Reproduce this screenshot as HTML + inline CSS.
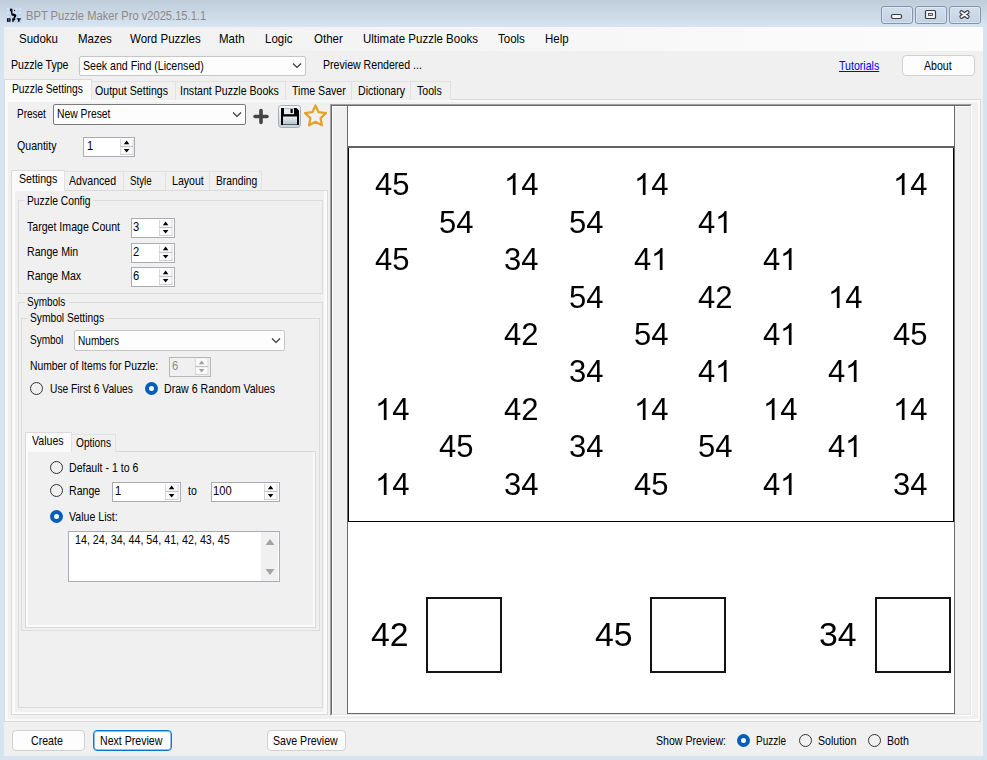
<!DOCTYPE html>
<html><head><meta charset="utf-8"><style>
*{margin:0;padding:0;box-sizing:border-box}
html,body{width:987px;height:760px;overflow:hidden;background:#d6e3f0;font-family:"Liberation Sans",sans-serif;font-size:10.6px;color:#000}
.a{position:absolute}
.t{position:absolute;white-space:nowrap;line-height:12px}
.wbtn{position:absolute;top:6px;width:32px;height:18px;border:1px solid #8393ab;border-radius:3px;background:linear-gradient(#d2deeb,#c3d2e3);box-shadow:inset 0 0 0 1px rgba(255,255,255,.35)}
.combo{position:absolute;background:#fdfdfd;border:1px solid #c6c6c6;border-radius:2px}
.btn{position:absolute;background:#fdfdfd;border:1px solid #d0d0d0;border-radius:4px}
.num{position:absolute;background:#fff;border:1px solid #a9acb2}
.spin{position:absolute;right:2px;top:1px;width:14px;height:16px}
.grp{position:absolute;border:1px solid #dcdcdc;border-radius:0}
.radio{position:absolute;width:13px;height:13px;border:1px solid #333;border-radius:50%}
.rsel{border:none;background:#005fb8}
.rsel::after{content:"";position:absolute;left:4px;top:4px;width:5px;height:5px;border-radius:50%;background:#fff}
.n{position:absolute;font-size:31px;line-height:31px;white-space:nowrap;will-change:transform}
.n2{font-size:33.8px;line-height:33px}
.one{width:0.5562em;height:0.7188em;vertical-align:baseline}
.box{position:absolute;border:2px solid #141414;width:76px;height:76px}
.chev{position:absolute}
</style></head><body>
<div class="a" style="left:0px;top:0px;width:987px;height:27px;background:linear-gradient(#bfcddb,#d7e4f1)"></div>
<div class="a" style="left:4px;top:27px;width:979px;height:729px;background:#f0f0f0"></div>
<div class="a" style="left:4px;top:27px;width:979px;height:24px;background:linear-gradient(to right,#f0f0f0,#fcfcfc)"></div>
<svg class="a" style="left:6px;top:7px" width="16" height="16" viewBox="0 0 16 16">
<rect width="16" height="16" fill="#c4d5f0"/>
<g fill="#dde8f8" opacity=".8"><rect x="1" y="1" width="2" height="2"/><rect x="5" y="1" width="2" height="2"/><rect x="9" y="1" width="2" height="2"/><rect x="13" y="1" width="2" height="2"/><rect x="1" y="5" width="2" height="2"/><rect x="9" y="5" width="2" height="2"/><rect x="13" y="5" width="2" height="2"/><rect x="1" y="9" width="2" height="2"/><rect x="13" y="9" width="2" height="2"/></g>
<circle cx="5.2" cy="3" r="1.4" fill="#000"/>
<circle cx="8.6" cy="3.3" r="0.6" fill="#000"/>
<path d="M4.6 3.5 L6.2 3.5 L6.6 6.6 Q9.8 6.8 10.4 8.2 Q10.2 9.8 8.6 11.6 L6.8 11.6 L8.2 9.4 Q7.8 8.4 5.6 8.4 Z" fill="#000"/>
<g fill="#0a0a0a"><path d="M1 11.3 H4 Q5 11.6 4.6 12.9 Q5 14.5 4 14.8 H1 Z"/><path d="M6.2 11.3 H9 Q9.8 12.2 9 13.2 H7.8 V14.8 H6.2 Z"/><path d="M10.8 11.3 H14.8 V12.6 H13.6 V14.8 H12 V12.6 H10.8 Z"/></g>
<g fill="#c4d5f0"><rect x="2.2" y="12.4" width="1.2" height="0.5"/><rect x="2.2" y="13.6" width="1.2" height="0.5"/></g>
</svg>
<div class="t" style="left:26.2px;top:10px;font-size:13.05px;transform:scaleX(0.8547);transform-origin:0 0;color:#8e8787">BPT Puzzle Maker Pro v2025.15.1.1</div>
<div class="wbtn" style="left:881px"></div>
<div class="wbtn" style="left:915px"></div>
<div class="wbtn" style="left:949px"></div>
<svg class="a" style="left:881px;top:6px" width="100" height="18" viewBox="0 0 100 18">
<rect x="10.5" y="8.5" width="10" height="4" rx="1.5" fill="#f4f4f4" stroke="#3c3c44" stroke-width="1.2"/>
<rect x="44.5" y="4.5" width="10" height="8" rx="1" fill="#f4f4f4" stroke="#3c3c44" stroke-width="1.2"/>
<rect x="47.5" y="7.5" width="4" height="2" fill="#c8d4e2" stroke="#3c3c44" stroke-width="0.8"/>
<path d="M80.5 6.3 L86.5 10.8 M86.5 6.3 L80.5 10.8" stroke="#3c3c44" stroke-width="4.2" stroke-linecap="round"/>
<path d="M80.5 6.3 L86.5 10.8 M86.5 6.3 L80.5 10.8" stroke="#f4f4f4" stroke-width="2" stroke-linecap="round"/>
</svg>
<div class="t" style="left:19px;top:33px;font-size:12.6px;line-height:13px;transform:scaleX(0.913);transform-origin:0 0">Sudoku</div>
<div class="t" style="left:78px;top:33px;font-size:12.6px;line-height:13px;transform:scaleX(0.913);transform-origin:0 0">Mazes</div>
<div class="t" style="left:130px;top:33px;font-size:12.6px;line-height:13px;transform:scaleX(0.913);transform-origin:0 0">Word Puzzles</div>
<div class="t" style="left:219px;top:33px;font-size:12.6px;line-height:13px;transform:scaleX(0.913);transform-origin:0 0">Math</div>
<div class="t" style="left:265px;top:33px;font-size:12.6px;line-height:13px;transform:scaleX(0.913);transform-origin:0 0">Logic</div>
<div class="t" style="left:314px;top:33px;font-size:12.6px;line-height:13px;transform:scaleX(0.913);transform-origin:0 0">Other</div>
<div class="t" style="left:363px;top:33px;font-size:12.6px;line-height:13px;transform:scaleX(0.913);transform-origin:0 0">Ultimate Puzzle Books</div>
<div class="t" style="left:498px;top:33px;font-size:12.6px;line-height:13px;transform:scaleX(0.913);transform-origin:0 0">Tools</div>
<div class="t" style="left:545px;top:33px;font-size:12.6px;line-height:13px;transform:scaleX(0.913);transform-origin:0 0">Help</div>
<div class="t" style="left:11.100000000000001px;top:59px;font-size:12.40px;transform:scaleX(0.8547);transform-origin:0 0;">Puzzle Type</div>
<div class="combo" style="left:79px;top:56px;width:227px;height:20px"></div>
<div class="t" style="left:82.8px;top:60px;font-size:12.40px;transform:scaleX(0.8547);transform-origin:0 0;">Seek and Find (Licensed)</div>
<svg class="a" style="left:292px;top:62px" width="10" height="7"><path d="M1 1.5 L5 5.5 L9 1.5" fill="none" stroke="#333" stroke-width="1.1"/></svg>
<div class="t" style="left:323.0px;top:59px;font-size:12.40px;transform:scaleX(0.8547);transform-origin:0 0;">Preview Rendered ...</div>
<div class="t" style="left:838.9px;top:60px;font-size:12.40px;transform:scaleX(0.8547);transform-origin:0 0;color:#0000ff;text-decoration:underline">Tutorials</div>
<div class="btn" style="left:902px;top:55px;width:73px;height:21px"></div>
<div class="t" style="left:924.0px;top:60px;font-size:12.40px;transform:scaleX(0.8547);transform-origin:0 0;">About</div>
<div class="a" style="left:4px;top:99px;width:977px;height:623px;border:1px solid #dadada;background:#fafafa"></div>
<div class="a" style="left:8px;top:102px;width:970px;height:617px;background:#f0f0f0"></div>
<div class="a" style="left:4px;top:79px;width:88px;height:21px;background:#fafafa;border:1px solid #dadada;border-bottom:none"></div>
<div class="a" style="left:5px;top:99px;width:86px;height:3px;background:#fafafa"></div>
<div class="a" style="left:91px;top:81px;width:85px;height:19px;background:#f0f0f0;border:1px solid #e1e1e1;border-bottom:none"></div>
<div class="a" style="left:175px;top:81px;width:111px;height:19px;background:#f0f0f0;border:1px solid #e1e1e1;border-bottom:none"></div>
<div class="a" style="left:285px;top:81px;width:67px;height:19px;background:#f0f0f0;border:1px solid #e1e1e1;border-bottom:none"></div>
<div class="a" style="left:351px;top:81px;width:60px;height:19px;background:#f0f0f0;border:1px solid #e1e1e1;border-bottom:none"></div>
<div class="a" style="left:410px;top:81px;width:41px;height:19px;background:#f0f0f0;border:1px solid #e1e1e1;border-bottom:none"></div>
<div class="t" style="left:12.0px;top:83px;font-size:12.40px;transform:scaleX(0.8305);transform-origin:0 0;">Puzzle Settings</div>
<div class="t" style="left:94.89999999999999px;top:85px;font-size:12.40px;transform:scaleX(0.8547);transform-origin:0 0;">Output Settings</div>
<div class="t" style="left:180.20000000000002px;top:85px;font-size:12.40px;transform:scaleX(0.8547);transform-origin:0 0;">Instant Puzzle Books</div>
<div class="t" style="left:292.3px;top:85px;font-size:12.40px;transform:scaleX(0.8547);transform-origin:0 0;">Time Saver</div>
<div class="t" style="left:358.0px;top:85px;font-size:12.40px;transform:scaleX(0.8547);transform-origin:0 0;">Dictionary</div>
<div class="t" style="left:417.40000000000003px;top:85px;font-size:12.40px;transform:scaleX(0.8547);transform-origin:0 0;">Tools</div>
<div class="t" style="left:17.3px;top:108px;font-size:12.40px;transform:scaleX(0.8063);transform-origin:0 0;">Preset</div>
<div class="combo" style="left:53px;top:104px;width:193px;height:21px;border-color:#7a7a7a"></div>
<div class="t" style="left:56.5px;top:108px;font-size:12.40px;transform:scaleX(0.8345);transform-origin:0 0;">New Preset</div>
<svg class="a" style="left:232px;top:111px" width="10" height="7"><path d="M1 1.5 L5 5.5 L9 1.5" fill="none" stroke="#333" stroke-width="1.1"/></svg>
<svg class="a" style="left:252px;top:108px" width="18" height="17"><path d="M9 2.5 V14.5 M3 8.5 H15" stroke="#444" stroke-width="3.6" stroke-linecap="round"/></svg>
<svg class="a" style="left:278px;top:105px" width="24" height="23" viewBox="0 0 24 23">
<defs><linearGradient id="sg" x1="0" y1="0" x2="0" y2="1"><stop offset="0" stop-color="#f7f9fb"/><stop offset="1" stop-color="#c6d2dc"/></linearGradient>
<linearGradient id="sg2" x1="0" y1="0" x2="0" y2="1"><stop offset="0" stop-color="#e9eef2"/><stop offset="1" stop-color="#b4c2cc"/></linearGradient></defs>
<rect x="0.5" y="0.5" width="22" height="22" rx="3" fill="url(#sg)" stroke="#9fb0bd"/>
<path d="M3 3 H18.5 L21 5.5 V20 H3 Z" fill="#000"/>
<rect x="6" y="3.2" width="10" height="6" fill="#e8ecef"/>
<rect x="12.5" y="4" width="2.2" height="4" fill="#000"/>
<rect x="5" y="11.5" width="14" height="8" fill="url(#sg2)"/>
</svg>
<svg class="a" style="left:303px;top:103px" width="26" height="25" viewBox="0 0 26 25"><path d="M12.50 2.50 L15.62 9.21 L22.96 10.10 L17.54 15.14 L18.97 22.40 L12.50 18.80 L6.03 22.40 L7.46 15.14 L2.04 10.10 L9.38 9.21 Z" fill="none" stroke="#e0a526" stroke-width="2.2" stroke-linejoin="round"/></svg>
<div class="t" style="left:17.400000000000002px;top:140px;font-size:12.40px;transform:scaleX(0.8547);transform-origin:0 0;">Quantity</div>
<div class="num" style="left:83px;top:137px;width:52px;height:20px"></div>
<div class="t" style="left:86.6px;top:140px;font-size:13.10px;transform:scaleX(0.8547);transform-origin:0 0;">1</div>
<svg class="a" style="left:119px;top:138px" width="15" height="18" viewBox="0 0 15 18">
<rect x="1" y="1" width="13.5" height="7.5" fill="#fafafa"/><rect x="1" y="9.5" width="13.5" height="7" fill="#fafafa"/>
<path d="M1.5 1 V8.5 M1.5 9.5 V16.5 M14 1 V8.5 M14 9.5 V16.5" stroke="#d8d8d8" stroke-width="1"/>
<path d="M1 8.5 H14.5" stroke="#c4c4c4" stroke-width="1.2"/><path d="M1 16.5 H14.5" stroke="#cfcfcf" stroke-width="1"/>
<path d="M4.8 6.2 L7.6 2.6 L10.4 6.2 Z" fill="#000"/><path d="M4.8 11 L7.6 14.6 L10.4 11 Z" fill="#000"/></svg>
<div class="a" style="left:11px;top:190px;width:317px;height:525px;border:1px solid #dadada;background:#fafafa"></div>
<div class="a" style="left:15px;top:191px;width:309px;height:521px;background:#f0f0f0"></div>
<div class="a" style="left:11px;top:170px;width:54px;height:20px;background:#fafafa;border:1px solid #dadada;border-bottom:none"></div>
<div class="a" style="left:12px;top:189px;width:52px;height:2px;background:#fafafa"></div>
<div class="a" style="left:64px;top:171px;width:60px;height:19px;background:#f0f0f0;border:1px solid #e1e1e1;border-bottom:none"></div>
<div class="a" style="left:123px;top:171px;width:43px;height:19px;background:#f0f0f0;border:1px solid #e1e1e1;border-bottom:none"></div>
<div class="a" style="left:165px;top:171px;width:45px;height:19px;background:#f0f0f0;border:1px solid #e1e1e1;border-bottom:none"></div>
<div class="a" style="left:209px;top:171px;width:53px;height:19px;background:#f0f0f0;border:1px solid #e1e1e1;border-bottom:none"></div>
<div class="t" style="left:19.2px;top:173px;font-size:12.40px;transform:scaleX(0.8547);transform-origin:0 0;">Settings</div>
<div class="t" style="left:69.1px;top:175px;font-size:12.40px;transform:scaleX(0.8547);transform-origin:0 0;">Advanced</div>
<div class="t" style="left:129.8px;top:175px;font-size:12.40px;transform:scaleX(0.7862);transform-origin:0 0;">Style</div>
<div class="t" style="left:171.8px;top:175px;font-size:12.40px;transform:scaleX(0.8547);transform-origin:0 0;">Layout</div>
<div class="t" style="left:215.9px;top:175px;font-size:12.40px;transform:scaleX(0.8305);transform-origin:0 0;">Branding</div>
<div class="grp" style="left:18px;top:200px;width:305px;height:94px"></div>
<div class="a" style="left:25px;top:195px;width:68px;height:12px;background:#f0f0f0"></div>
<div class="t" style="left:27.1px;top:195px;font-size:12.40px;transform:scaleX(0.8305);transform-origin:0 0;">Puzzle Config</div>
<div class="t" style="left:27.3px;top:221px;font-size:12.40px;transform:scaleX(0.8547);transform-origin:0 0;">Target Image Count</div>
<div class="num" style="left:131px;top:218px;width:44px;height:20px"></div>
<div class="t" style="left:132.9px;top:221px;font-size:13.10px;transform:scaleX(0.8547);transform-origin:0 0;">3</div>
<svg class="a" style="left:158px;top:219px" width="15" height="18" viewBox="0 0 15 18">
<rect x="1" y="1" width="13.5" height="7.5" fill="#fafafa"/><rect x="1" y="9.5" width="13.5" height="7" fill="#fafafa"/>
<path d="M1.5 1 V8.5 M1.5 9.5 V16.5 M14 1 V8.5 M14 9.5 V16.5" stroke="#d8d8d8" stroke-width="1"/>
<path d="M1 8.5 H14.5" stroke="#c4c4c4" stroke-width="1.2"/><path d="M1 16.5 H14.5" stroke="#cfcfcf" stroke-width="1"/>
<path d="M4.8 6.2 L7.6 2.6 L10.4 6.2 Z" fill="#000"/><path d="M4.8 11 L7.6 14.6 L10.4 11 Z" fill="#000"/></svg>
<div class="t" style="left:27.3px;top:246px;font-size:12.40px;transform:scaleX(0.8547);transform-origin:0 0;">Range Min</div>
<div class="num" style="left:131px;top:243px;width:44px;height:20px"></div>
<div class="t" style="left:132.9px;top:246px;font-size:13.10px;transform:scaleX(0.8547);transform-origin:0 0;">2</div>
<svg class="a" style="left:158px;top:244px" width="15" height="18" viewBox="0 0 15 18">
<rect x="1" y="1" width="13.5" height="7.5" fill="#fafafa"/><rect x="1" y="9.5" width="13.5" height="7" fill="#fafafa"/>
<path d="M1.5 1 V8.5 M1.5 9.5 V16.5 M14 1 V8.5 M14 9.5 V16.5" stroke="#d8d8d8" stroke-width="1"/>
<path d="M1 8.5 H14.5" stroke="#c4c4c4" stroke-width="1.2"/><path d="M1 16.5 H14.5" stroke="#cfcfcf" stroke-width="1"/>
<path d="M4.8 6.2 L7.6 2.6 L10.4 6.2 Z" fill="#000"/><path d="M4.8 11 L7.6 14.6 L10.4 11 Z" fill="#000"/></svg>
<div class="t" style="left:27.3px;top:270px;font-size:12.40px;transform:scaleX(0.8547);transform-origin:0 0;">Range Max</div>
<div class="num" style="left:131px;top:267px;width:44px;height:20px"></div>
<div class="t" style="left:132.9px;top:270px;font-size:13.10px;transform:scaleX(0.8547);transform-origin:0 0;">6</div>
<svg class="a" style="left:158px;top:268px" width="15" height="18" viewBox="0 0 15 18">
<rect x="1" y="1" width="13.5" height="7.5" fill="#fafafa"/><rect x="1" y="9.5" width="13.5" height="7" fill="#fafafa"/>
<path d="M1.5 1 V8.5 M1.5 9.5 V16.5 M14 1 V8.5 M14 9.5 V16.5" stroke="#d8d8d8" stroke-width="1"/>
<path d="M1 8.5 H14.5" stroke="#c4c4c4" stroke-width="1.2"/><path d="M1 16.5 H14.5" stroke="#cfcfcf" stroke-width="1"/>
<path d="M4.8 6.2 L7.6 2.6 L10.4 6.2 Z" fill="#000"/><path d="M4.8 11 L7.6 14.6 L10.4 11 Z" fill="#000"/></svg>
<div class="grp" style="left:18px;top:302px;width:305px;height:406px"></div>
<div class="a" style="left:25px;top:297px;width:44px;height:12px;background:#f0f0f0"></div>
<div class="t" style="left:27.1px;top:296px;font-size:12.40px;transform:scaleX(0.8063);transform-origin:0 0;">Symbols</div>
<div class="grp" style="left:21px;top:318px;width:299px;height:313px"></div>
<div class="a" style="left:28px;top:313px;width:79px;height:12px;background:#f0f0f0"></div>
<div class="t" style="left:30.0px;top:312px;font-size:12.40px;transform:scaleX(0.8265);transform-origin:0 0;">Symbol Settings</div>
<div class="t" style="left:30.0px;top:334px;font-size:12.40px;transform:scaleX(0.8063);transform-origin:0 0;">Symbol</div>
<div class="combo" style="left:74px;top:330px;width:211px;height:21px"></div>
<div class="t" style="left:77.8px;top:335px;font-size:12.40px;transform:scaleX(0.8144);transform-origin:0 0;">Numbers</div>
<svg class="a" style="left:271px;top:337px" width="10" height="7"><path d="M1 1.5 L5 5.5 L9 1.5" fill="none" stroke="#333" stroke-width="1.1"/></svg>
<div class="t" style="left:30.0px;top:360px;font-size:12.40px;transform:scaleX(0.8345);transform-origin:0 0;">Number of Items for Puzzle:</div>
<div class="num" style="left:169px;top:357px;width:42px;height:20px;background:#f0f0f0;border-color:#b3b6bb"></div>
<div class="t" style="left:171.8px;top:360px;font-size:13.10px;transform:scaleX(0.8547);transform-origin:0 0;color:#8d8d8d">6</div>
<svg class="a" style="left:194px;top:358px" width="15" height="18" viewBox="0 0 15 18">
<rect x="1" y="1" width="13.5" height="7.5" fill="#fafafa"/><rect x="1" y="9.5" width="13.5" height="7" fill="#fafafa"/>
<path d="M1.5 1 V8.5 M1.5 9.5 V16.5 M14 1 V8.5 M14 9.5 V16.5" stroke="#d8d8d8" stroke-width="1"/>
<path d="M1 8.5 H14.5" stroke="#c4c4c4" stroke-width="1.2"/><path d="M1 16.5 H14.5" stroke="#cfcfcf" stroke-width="1"/>
<path d="M4.8 6.2 L7.6 2.6 L10.4 6.2 Z" fill="#a0a0a0"/><path d="M4.8 11 L7.6 14.6 L10.4 11 Z" fill="#a0a0a0"/></svg>
<div class="radio" style="left:30px;top:382px"></div>
<div class="t" style="left:49.5px;top:383px;font-size:12.40px;transform:scaleX(0.8265);transform-origin:0 0;">Use First 6 Values</div>
<div class="radio rsel" style="left:145px;top:382px"></div>
<div class="t" style="left:164.0px;top:383px;font-size:12.40px;transform:scaleX(0.8547);transform-origin:0 0;">Draw 6 Random Values</div>
<div class="a" style="left:25px;top:451px;width:291px;height:177px;border:1px solid #dadada;background:#fafafa"></div>
<div class="a" style="left:28px;top:452px;width:285px;height:173px;background:#f0f0f0"></div>
<div class="a" style="left:25px;top:432px;width:47px;height:19px;background:#fafafa;border:1px solid #dadada;border-bottom:none"></div>
<div class="a" style="left:26px;top:450px;width:45px;height:2px;background:#fafafa"></div>
<div class="a" style="left:71px;top:434px;width:45px;height:18px;background:#f0f0f0;border:1px solid #e1e1e1;border-bottom:none"></div>
<div class="t" style="left:31.8px;top:435px;font-size:12.40px;transform:scaleX(0.8547);transform-origin:0 0;">Values</div>
<div class="t" style="left:75.6px;top:437px;font-size:12.40px;transform:scaleX(0.8184);transform-origin:0 0;">Options</div>
<div class="radio" style="left:50px;top:461px"></div>
<div class="t" style="left:69.1px;top:462px;font-size:12.40px;transform:scaleX(0.8547);transform-origin:0 0;">Default - 1 to 6</div>
<div class="radio" style="left:50px;top:484px"></div>
<div class="t" style="left:69.1px;top:485px;font-size:12.40px;transform:scaleX(0.8547);transform-origin:0 0;">Range</div>
<div class="num" style="left:112px;top:482px;width:69px;height:20px"></div>
<div class="t" style="left:114.8px;top:485px;font-size:13.10px;transform:scaleX(0.8547);transform-origin:0 0;">1</div>
<svg class="a" style="left:164px;top:483px" width="15" height="18" viewBox="0 0 15 18">
<rect x="1" y="1" width="13.5" height="7.5" fill="#fafafa"/><rect x="1" y="9.5" width="13.5" height="7" fill="#fafafa"/>
<path d="M1.5 1 V8.5 M1.5 9.5 V16.5 M14 1 V8.5 M14 9.5 V16.5" stroke="#d8d8d8" stroke-width="1"/>
<path d="M1 8.5 H14.5" stroke="#c4c4c4" stroke-width="1.2"/><path d="M1 16.5 H14.5" stroke="#cfcfcf" stroke-width="1"/>
<path d="M4.8 6.2 L7.6 2.6 L10.4 6.2 Z" fill="#000"/><path d="M4.8 11 L7.6 14.6 L10.4 11 Z" fill="#000"/></svg>
<div class="t" style="left:188.4px;top:485px;font-size:12.40px;transform:scaleX(0.8547);transform-origin:0 0;">to</div>
<div class="num" style="left:211px;top:482px;width:69px;height:20px"></div>
<div class="t" style="left:213.0px;top:485px;font-size:13.10px;transform:scaleX(0.8547);transform-origin:0 0;">100</div>
<svg class="a" style="left:263px;top:483px" width="15" height="18" viewBox="0 0 15 18">
<rect x="1" y="1" width="13.5" height="7.5" fill="#fafafa"/><rect x="1" y="9.5" width="13.5" height="7" fill="#fafafa"/>
<path d="M1.5 1 V8.5 M1.5 9.5 V16.5 M14 1 V8.5 M14 9.5 V16.5" stroke="#d8d8d8" stroke-width="1"/>
<path d="M1 8.5 H14.5" stroke="#c4c4c4" stroke-width="1.2"/><path d="M1 16.5 H14.5" stroke="#cfcfcf" stroke-width="1"/>
<path d="M4.8 6.2 L7.6 2.6 L10.4 6.2 Z" fill="#000"/><path d="M4.8 11 L7.6 14.6 L10.4 11 Z" fill="#000"/></svg>
<div class="radio rsel" style="left:50px;top:510px"></div>
<div class="t" style="left:69.1px;top:511px;font-size:12.40px;transform:scaleX(0.8547);transform-origin:0 0;">Value List:</div>
<div class="num" style="left:68px;top:531px;width:212px;height:51px"></div>
<div class="a" style="left:261px;top:532px;width:17px;height:49px;background:#f0f0f0"></div>
<svg class="a" style="left:261px;top:532px" width="17" height="49"><path d="M4.5 13 L9 7 L13.5 13 Z" fill="#a3a3a3"/><path d="M4.5 37 L9 43 L13.5 37 Z" fill="#a3a3a3"/></svg>
<div class="t" style="left:74.7px;top:534px;font-size:12.52px;transform:scaleX(0.8547);transform-origin:0 0;">14, 24, 34, 44, 54, 41, 42, 43, 45</div>
<div class="a" style="left:330px;top:104px;width:642px;height:612px;border-top:1px solid #a0a0a0;border-left:1px solid #a0a0a0;border-right:1px solid #fff;border-bottom:1px solid #fff;background:#f0f0f0"></div>
<div class="a" style="left:331px;top:105px;width:640px;height:610px;border-top:1px solid #696969;border-left:1px solid #696969;border-right:1px solid #e3e3e3;border-bottom:1px solid #e3e3e3"></div>
<div class="a" style="left:332px;top:106px;width:638px;height:608px;border-top:1px solid #fff;border-left:1px solid #fff"></div>
<div class="a" style="left:347px;top:106px;width:608px;height:608px;background:#fff;border:1px solid #696969;border-top:none"></div>
<div class="a" style="left:348px;top:147px;width:606px;height:375px;border:1px solid #000"></div>
<div class="a" style="left:347px;top:146px;width:608px;height:2px;background:#626262"></div>
<div class="n" style="left:374.6px;top:169.3px">45</div>
<div class="n" style="left:504.1px;top:169.3px"><svg class="one" viewBox="0 0 1139 1472"><path d="M763 0H583V1147Q518 1085 412 1023Q306 961 222 930V1104Q373 1175 486 1276Q599 1377 646 1472H763Z" transform="matrix(1 0 0 -1 0 1472)"/></svg>4</div>
<div class="n" style="left:633.6px;top:169.3px"><svg class="one" viewBox="0 0 1139 1472"><path d="M763 0H583V1147Q518 1085 412 1023Q306 961 222 930V1104Q373 1175 486 1276Q599 1377 646 1472H763Z" transform="matrix(1 0 0 -1 0 1472)"/></svg>4</div>
<div class="n" style="left:892.6px;top:169.3px"><svg class="one" viewBox="0 0 1139 1472"><path d="M763 0H583V1147Q518 1085 412 1023Q306 961 222 930V1104Q373 1175 486 1276Q599 1377 646 1472H763Z" transform="matrix(1 0 0 -1 0 1472)"/></svg>4</div>
<div class="n" style="left:439.4px;top:206.7px">54</div>
<div class="n" style="left:568.9px;top:206.7px">54</div>
<div class="n" style="left:698.4px;top:206.7px">4<svg class="one" viewBox="0 0 1139 1472"><path d="M763 0H583V1147Q518 1085 412 1023Q306 961 222 930V1104Q373 1175 486 1276Q599 1377 646 1472H763Z" transform="matrix(1 0 0 -1 0 1472)"/></svg></div>
<div class="n" style="left:374.6px;top:244.1px">45</div>
<div class="n" style="left:504.1px;top:244.1px">34</div>
<div class="n" style="left:633.6px;top:244.1px">4<svg class="one" viewBox="0 0 1139 1472"><path d="M763 0H583V1147Q518 1085 412 1023Q306 961 222 930V1104Q373 1175 486 1276Q599 1377 646 1472H763Z" transform="matrix(1 0 0 -1 0 1472)"/></svg></div>
<div class="n" style="left:763.1px;top:244.1px">4<svg class="one" viewBox="0 0 1139 1472"><path d="M763 0H583V1147Q518 1085 412 1023Q306 961 222 930V1104Q373 1175 486 1276Q599 1377 646 1472H763Z" transform="matrix(1 0 0 -1 0 1472)"/></svg></div>
<div class="n" style="left:568.9px;top:281.5px">54</div>
<div class="n" style="left:698.4px;top:281.5px">42</div>
<div class="n" style="left:827.9px;top:281.5px"><svg class="one" viewBox="0 0 1139 1472"><path d="M763 0H583V1147Q518 1085 412 1023Q306 961 222 930V1104Q373 1175 486 1276Q599 1377 646 1472H763Z" transform="matrix(1 0 0 -1 0 1472)"/></svg>4</div>
<div class="n" style="left:504.1px;top:318.9px">42</div>
<div class="n" style="left:633.6px;top:318.9px">54</div>
<div class="n" style="left:763.1px;top:318.9px">4<svg class="one" viewBox="0 0 1139 1472"><path d="M763 0H583V1147Q518 1085 412 1023Q306 961 222 930V1104Q373 1175 486 1276Q599 1377 646 1472H763Z" transform="matrix(1 0 0 -1 0 1472)"/></svg></div>
<div class="n" style="left:892.6px;top:318.9px">45</div>
<div class="n" style="left:568.9px;top:356.3px">34</div>
<div class="n" style="left:698.4px;top:356.3px">4<svg class="one" viewBox="0 0 1139 1472"><path d="M763 0H583V1147Q518 1085 412 1023Q306 961 222 930V1104Q373 1175 486 1276Q599 1377 646 1472H763Z" transform="matrix(1 0 0 -1 0 1472)"/></svg></div>
<div class="n" style="left:827.9px;top:356.3px">4<svg class="one" viewBox="0 0 1139 1472"><path d="M763 0H583V1147Q518 1085 412 1023Q306 961 222 930V1104Q373 1175 486 1276Q599 1377 646 1472H763Z" transform="matrix(1 0 0 -1 0 1472)"/></svg></div>
<div class="n" style="left:374.6px;top:393.7px"><svg class="one" viewBox="0 0 1139 1472"><path d="M763 0H583V1147Q518 1085 412 1023Q306 961 222 930V1104Q373 1175 486 1276Q599 1377 646 1472H763Z" transform="matrix(1 0 0 -1 0 1472)"/></svg>4</div>
<div class="n" style="left:504.1px;top:393.7px">42</div>
<div class="n" style="left:633.6px;top:393.7px"><svg class="one" viewBox="0 0 1139 1472"><path d="M763 0H583V1147Q518 1085 412 1023Q306 961 222 930V1104Q373 1175 486 1276Q599 1377 646 1472H763Z" transform="matrix(1 0 0 -1 0 1472)"/></svg>4</div>
<div class="n" style="left:763.1px;top:393.7px"><svg class="one" viewBox="0 0 1139 1472"><path d="M763 0H583V1147Q518 1085 412 1023Q306 961 222 930V1104Q373 1175 486 1276Q599 1377 646 1472H763Z" transform="matrix(1 0 0 -1 0 1472)"/></svg>4</div>
<div class="n" style="left:892.6px;top:393.7px"><svg class="one" viewBox="0 0 1139 1472"><path d="M763 0H583V1147Q518 1085 412 1023Q306 961 222 930V1104Q373 1175 486 1276Q599 1377 646 1472H763Z" transform="matrix(1 0 0 -1 0 1472)"/></svg>4</div>
<div class="n" style="left:439.4px;top:431.1px">45</div>
<div class="n" style="left:568.9px;top:431.1px">34</div>
<div class="n" style="left:698.4px;top:431.1px">54</div>
<div class="n" style="left:827.9px;top:431.1px">4<svg class="one" viewBox="0 0 1139 1472"><path d="M763 0H583V1147Q518 1085 412 1023Q306 961 222 930V1104Q373 1175 486 1276Q599 1377 646 1472H763Z" transform="matrix(1 0 0 -1 0 1472)"/></svg></div>
<div class="n" style="left:374.6px;top:468.5px"><svg class="one" viewBox="0 0 1139 1472"><path d="M763 0H583V1147Q518 1085 412 1023Q306 961 222 930V1104Q373 1175 486 1276Q599 1377 646 1472H763Z" transform="matrix(1 0 0 -1 0 1472)"/></svg>4</div>
<div class="n" style="left:504.1px;top:468.5px">34</div>
<div class="n" style="left:633.6px;top:468.5px">45</div>
<div class="n" style="left:763.1px;top:468.5px">4<svg class="one" viewBox="0 0 1139 1472"><path d="M763 0H583V1147Q518 1085 412 1023Q306 961 222 930V1104Q373 1175 486 1276Q599 1377 646 1472H763Z" transform="matrix(1 0 0 -1 0 1472)"/></svg></div>
<div class="n" style="left:892.6px;top:468.5px">34</div>
<div class="n n2" style="left:370.6px;top:617.5px">42</div>
<div class="box" style="left:426px;top:597px"></div>
<div class="n n2" style="left:595px;top:617.5px">45</div>
<div class="box" style="left:650px;top:597px"></div>
<div class="n n2" style="left:818.8px;top:617.5px">34</div>
<div class="box" style="left:875px;top:597px"></div>
<div class="btn" style="left:12px;top:730px;width:73px;height:21px"></div>
<div class="t" style="left:31.2px;top:735px;font-size:12.40px;transform:scaleX(0.8547);transform-origin:0 0;">Create</div>
<div class="btn" style="left:93px;top:730px;width:79px;height:21px;border:1px solid #0078d7;box-shadow:inset 0 0 0 1px rgba(0,120,215,.45)"></div>
<div class="t" style="left:100.1px;top:735px;font-size:12.40px;transform:scaleX(0.8547);transform-origin:0 0;">Next Preview</div>
<div class="btn" style="left:267px;top:730px;width:79px;height:21px"></div>
<div class="t" style="left:272.6px;top:735px;font-size:12.40px;transform:scaleX(0.8547);transform-origin:0 0;">Save Preview</div>
<div class="t" style="left:655.8px;top:735px;font-size:12.40px;transform:scaleX(0.8547);transform-origin:0 0;">Show Preview:</div>
<div class="radio rsel" style="left:737px;top:734px"></div>
<div class="t" style="left:755.9px;top:735px;font-size:12.40px;transform:scaleX(0.8063);transform-origin:0 0;">Puzzle</div>
<div class="radio" style="left:799px;top:734px"></div>
<div class="t" style="left:818.0px;top:735px;font-size:12.40px;transform:scaleX(0.8547);transform-origin:0 0;">Solution</div>
<div class="radio" style="left:868px;top:734px"></div>
<div class="t" style="left:887.1999999999999px;top:735px;font-size:12.40px;transform:scaleX(0.8547);transform-origin:0 0;">Both</div>
</body></html>
